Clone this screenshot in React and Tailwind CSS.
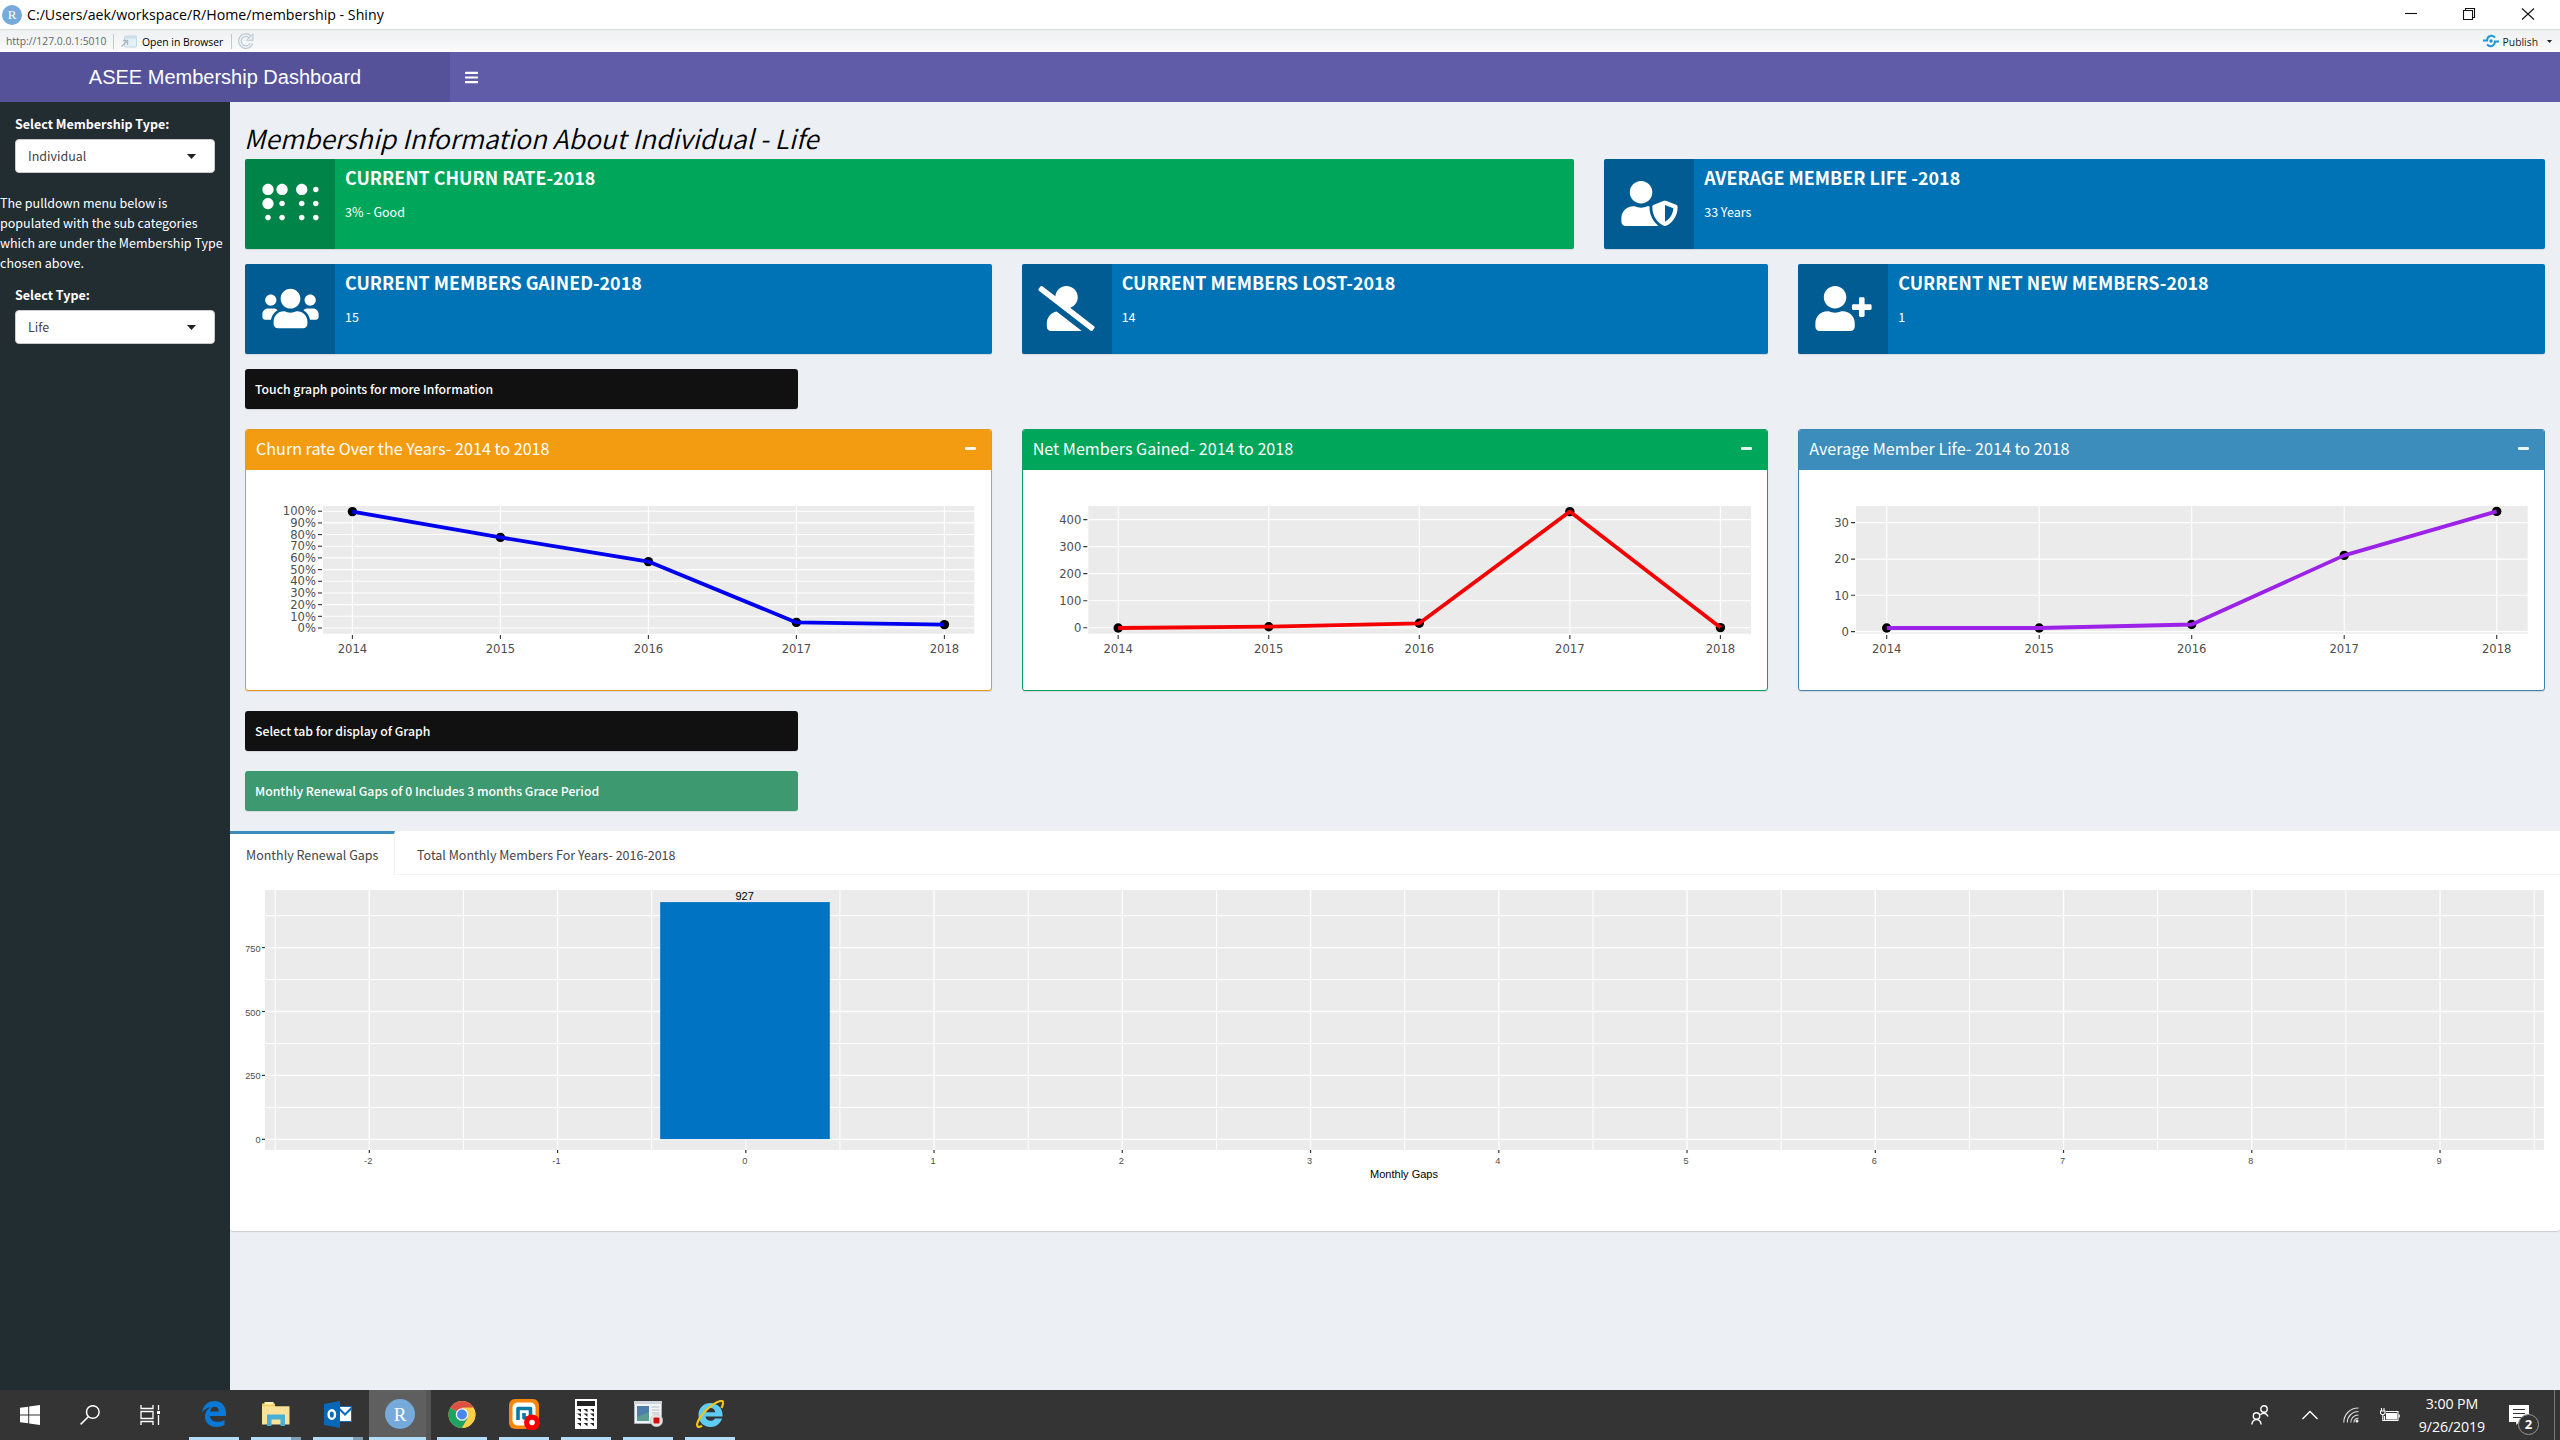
import React from "react";
import { FaBraille, FaUsers, FaUserShield, FaUserSlash, FaUserPlus, FaBars } from "react-icons/fa";

const Caret = ({ className }) => (
  <svg className={className} viewBox="0 0 9 5" fill="currentColor">
    <path d="M0 0h9L4.5 5z" />
  </svg>
);

function TitleBar() {
  return (
    <div className="flex h-[29px] items-center bg-white pl-[2px] font-['Open_Sans','Noto_Sans',sans-serif] text-black">
      <span className="flex h-5 w-5 items-center justify-center rounded-full bg-[#75aadb] font-['Liberation_Serif',serif] text-[13px] text-white">R</span>
      <span className="ml-[5px] text-[14.2px] leading-[29px] whitespace-nowrap">C:/Users/aek/workspace/R/Home/membership - Shiny</span>
      <svg className="ml-auto mr-[25px] h-[29px] w-[131px]" viewBox="0 0 131 29" fill="none" stroke="#111" strokeWidth="1.1">
        <path d="M1 13.5h12" />
        <path d="M59.5 10.5h9v9h-9zM61.5 10.5v-2h9v9h-2" />
        <path d="M118 8.5l12 11M130 8.5l-12 11" />
      </svg>
    </div>
  );
}

function ToolBar() {
  return (
    <div className="flex h-[23px] items-center border-t border-[#d9dddc] bg-gradient-to-b from-[#eef0f2] to-[#fafbfb] pl-[6px] font-['Open_Sans','Noto_Sans',sans-serif] text-[10.35px]">
      <span className="w-[107px] leading-[22px] text-[#666]">http://127.0.0.1:5010</span>
      <span className="h-[15px] w-px bg-[#c4c8ca]" />
      <svg className="ml-[7px] h-[13px] w-4" viewBox="0 0 16 13" fill="none">
        <rect x="3.5" y="1" width="12" height="11" rx="1" fill="#e3f0f6" stroke="#c3d7e2" />
        <rect x="3" y="1" width="13" height="2.5" fill="#c9dfea" />
        <path d="M0.5 11.5l5-5M2 5.5h4.5V10" stroke="#aab6c0" strokeWidth="1.4" />
      </svg>
      <span className="ml-[5px] w-[89px] pt-[2px] text-[10.4px] leading-5 text-black">Open in Browser</span>
      <span className="h-[15px] w-px bg-[#c4c8ca]" />
      <svg className="ml-[6px] h-4 w-4" viewBox="0 0 16 16" fill="none">
        <path d="M13.5 10.3A6 6 0 1 1 12 3.7" stroke="#b3c5d3" strokeWidth="3.6" />
        <path d="M13.5 10.3A6 6 0 1 1 12 3.7" stroke="#eef3f6" strokeWidth="1.6" />
        <path d="M15 .8v6.5H8.5z" fill="#e6edf2" stroke="#b3c5d3" strokeWidth=".9" />
      </svg>
      <svg className="ml-auto h-[14px] w-4" viewBox="0 0 16 14" fill="none" stroke="#1b9ad8" strokeWidth="2">
        <path d="M12 3.500C9 .5 4.500 1.500 4 6.500M0 6.500h5" />
        <path d="M4 10.500c3 3 7.500 2 8-3M11 7.500h5" />
        <circle cx="8" cy="7" r="1.7" fill="#1b9ad8" stroke="none" />
      </svg>
      <span className="ml-[4px] pt-[2px] leading-5 text-[#222]">Publish</span>
      <Caret className="ml-[9px] mr-[8px] h-[3px] w-[5px] text-[#222]" />
    </div>
  );
}

function Select({ value }) {
  return (
    <div className="mx-[15px] flex h-[34px] items-center justify-between rounded-[4px] border border-[#ccc] bg-white pl-3 pr-[18px] text-[#444]">
      <span className="text-[12.5px] leading-8">{value}</span>
      <Caret className="h-[5px] w-[9px] text-[#222]" />
    </div>
  );
}

function Sidebar() {
  return (
    <aside className="w-[230px] shrink-0 bg-[#222d32] pt-3 text-white">
      <p className="mb-[5px] pl-[15px] text-[12.5px] font-bold leading-5">Select Membership Type:</p>
      <Select value="Individual" />
      <p className="mt-5 text-[12.5px] leading-5 whitespace-nowrap">
        The pulldown menu below is
        <br />
        populated with the sub categories
        <br />
        which are under the Membership Type
        <br />
        chosen above.
      </p>
      <p className="mb-[5px] mt-3 pl-[15px] text-[12.5px] font-bold leading-5">Select Type:</p>
      <Select value="Life" />
    </aside>
  );
}

function InfoBox({ Icon, title, value, green }) {
  return (
    <div className={`flex h-[90px] rounded-[2px] text-white shadow-[0_1px_1px_rgba(0,0,0,0.1)] ${green ? "bg-[#00a65a]" : "bg-[#0073b7]"}`}>
      <div className="flex w-[90px] shrink-0 items-center justify-center rounded-l-[2px] bg-black/20 pb-px">
        <Icon className="h-[45px] w-[57px]" />
      </div>
      <div className="px-[10px] pt-2">
        <p className="text-[17.9px] font-bold leading-5">{title}</p>
        <p className="mt-[15px] text-[12.5px] leading-5">{value}</p>
      </div>
    </div>
  );
}

const Notice = ({ children, green }) => (
  <div className={`h-10 w-[553px] rounded-[3px] px-[10px] text-[12.25px] font-medium leading-10 text-white shadow-[0_1px_1px_rgba(0,0,0,0.1)] ${green ? "bg-[#3d9970]" : "bg-[#111]"}`}>{children}</div>
);

const YEARS = [2014, 2015, 2016, 2017, 2018];

function LineCard({ title, frame, bar, stroke, left, right, x0, step, ticks, points }) {
  return (
    <div className={`h-[262px] overflow-hidden rounded-[3px] border bg-white shadow-[0_1px_1px_rgba(0,0,0,0.1)] ${frame}`}>
      <div className={`flex h-10 items-center justify-between pb-[4px] pl-[10px] pr-[15px] text-white ${bar}`}>
        <span className="text-[16.15px] leading-5">{title}</span>
        <span className="h-[3px] w-[11px] rounded-[1px] bg-white/90" />
      </div>
      <svg className="h-[219px] w-[744px]" viewBox="0 0 744 219" fontFamily="'DejaVu Sans', Verdana, sans-serif" fontSize="11.6" fill="#4d4d4d">
        <rect x={left} y="36" width={right - left} height="127.7" fill="#ebebeb" />
        {ticks.map(([label, y]) => (
          <g key={label}>
            <path d={`M${left} ${y}H${right}`} stroke="#fff" strokeWidth="1.1" />
            <path d={`M${left - 5} ${y}h4`} stroke="#333" strokeWidth="1.1" />
            <text x={left - 7} y={y + 4.2} textAnchor="end">{label}</text>
          </g>
        ))}
        {YEARS.map((year, i) => (
          <g key={year}>
            <path d={`M${x0 + i * step} 36v127.7`} stroke="#fff" strokeWidth="1.1" />
            <path d={`M${x0 + i * step} 165v4`} stroke="#333" strokeWidth="1.1" />
            <text x={x0 + i * step} y="183" textAnchor="middle">{year}</text>
          </g>
        ))}
        {points.map((y, i) => (
          <circle key={i} cx={x0 + i * step} cy={y} r="4.7" fill="#000" />
        ))}
        <polyline points={points.map((y, i) => `${x0 + i * step},${y}`).join(" ")} fill="none" stroke={stroke} strokeWidth="3.78" strokeLinejoin="round" />
      </svg>
    </div>
  );
}

const PERCENTS = Array.from({ length: 11 }, (_, i) => [`${i * 10}%`, 158 - i * 11.68]);

const GAPS = [-2, -1, 0, 1, 2, 3, 4, 5, 6, 7, 8, 9];

function GapsChart() {
  const x = (v) => 515.8 + v * 188.25;
  const y = (v) => 264.4 - v * 0.2558;
  return (
    <svg className="h-[356px] w-[2330px]" viewBox="0 0 2330 356" fontFamily="'Liberation Sans', Arial, sans-serif">
      <rect x="35" y="15" width="2279" height="260" fill="#ebebeb" />
      <g stroke="#fff">
        {[0, 1, 2, 3, 4, 5, 6, 7].map((i) => (
          <path key={i} d={`M35 ${y(i * 125)}H2314`} strokeWidth={i % 2 ? 1 : 1.3} />
        ))}
        {[-2.5, ...GAPS.flatMap((v) => [v, v + 0.5])].map((v) => (
          <path key={v} d={`M${x(v)} 15v260`} strokeWidth={v % 1 ? 1 : 1.3} />
        ))}
      </g>
      <rect x="430.2" y="27.1" width="169.6" height="237" fill="#0073c2" />
      <text x="514.6" y="25" fontSize="11" textAnchor="middle">927</text>
      <g fontSize="9.2" fill="#4d4d4d">
        {[0, 250, 500, 750].map((v) => (
          <g key={v}>
            <path d={`M32 ${y(v)}h3`} stroke="#333" strokeWidth="1.2" />
            <text x="30.5" y={y(v) + 4} textAnchor="end">{v}</text>
          </g>
        ))}
        {GAPS.map((v) => (
          <g key={v}>
            <path d={`M${x(v)} 275v3`} stroke="#333" strokeWidth="1.2" />
            <text x={x(v) - 1.1} y="289" textAnchor="middle">{v}</text>
          </g>
        ))}
      </g>
      <text x="1174" y="302.5" fontSize="11" textAnchor="middle">Monthly Gaps</text>
    </svg>
  );
}

function Content() {
  return (
    <main className="flex min-w-0 flex-1 flex-col">
      <div className="px-[15px] pt-[21px]">
        <h1 className="-ml-px mb-[6px] text-[26.4px] font-[350] italic leading-[30px] text-black">Membership Information About Individual - Life</h1>
        <div className="grid grid-cols-[1329.2fr_940.8fr] gap-[30px]">
          <InfoBox green Icon={FaBraille} title="CURRENT CHURN RATE-2018" value="3% - Good" />
          <InfoBox Icon={FaUserShield} title="AVERAGE MEMBER LIFE -2018" value="33 Years" />
        </div>
        <div className="mb-[15px] mt-[15px] grid grid-cols-3 gap-[30px]">
          <InfoBox Icon={FaUsers} title="CURRENT MEMBERS GAINED-2018" value="15" />
          <InfoBox Icon={FaUserSlash} title="CURRENT MEMBERS LOST-2018" value="14" />
          <InfoBox Icon={FaUserPlus} title="CURRENT NET NEW MEMBERS-2018" value="1" />
        </div>
        <Notice>Touch graph points for more Information</Notice>
        <div className="my-5 grid grid-cols-3 gap-[30px]">
          <LineCard title="Churn rate Over the Years- 2014 to 2018" frame="border-[#e59a20]" bar="bg-[#f39c12]" stroke="#0000ee" left={77} right={728.2} x0={106.4} step={148} ticks={PERCENTS} points={[41.6, 67.4, 91.6, 152.4, 154.6]} />
          <LineCard title="Net Members Gained- 2014 to 2018" frame="border-[#0f9f60]" bar="bg-[#00a65a]" stroke="#f50000" left={65.3} right={728} x0={95.2} step={150.55} ticks={[["0", 157.7], ["100", 130.7], ["200", 103.6], ["300", 76.6], ["400", 49.6]]} points={[158, 156.7, 153.3, 41.6, 157.6]} />
          <LineCard title="Average Member Life- 2014 to 2018" frame="border-[#3c86b0]" bar="bg-[#3c8dbc]" stroke="#9b22e6" left={57} right={728.7} x0={87.7} step={152.5} ticks={[["0", 161.6], ["10", 125.3], ["20", 89.1], ["30", 52.6]]} points={[158, 158, 154.5, 85.4, 41.4]} />
        </div>
        <Notice>Select tab for display of Graph</Notice>
        <div className="mb-5 mt-5">
          <Notice green>Monthly Renewal Gaps of 0 Includes 3 months Grace Period</Notice>
        </div>
      </div>
      <section className="h-[400px] rounded-b-[3px] bg-white shadow-[0_1px_1px_rgba(0,0,0,0.15)]">
        <div className="flex h-11 text-[12.5px] leading-5 text-[#444]">
          <div className="w-[165px] border-r border-t-[3px] border-r-[#f0f0f0] border-t-[#3c8dbc] pl-4 pt-[11px]">Monthly Renewal Gaps</div>
          <div className="flex-1 border-b border-[#f4f4f4] pl-[22px] pt-[14px]">Total Monthly Members For Years- 2016-2018</div>
        </div>
        <GapsChart />
      </section>
    </main>
  );
}

const EdgeIcon = () => (
  <svg className="h-[26px] w-6" viewBox="0 0 24 26">
    <path d="M0 11.500C1 4.500 6 0 12.500 0 19.500 0 24 5 24 12v3H8c.3 4 3.500 5.800 7.500 5.800 2.700 0 5-.7 7-1.900v5.200c-2.300 1.300-5 1.900-8 1.900C7.500 26 3 21.800 3 15.500c0-4 2-7.200 5.500-9.200C5 6.800 2 8.600 0 11.500zM8.200 10.500h8.600c0-3-1.400-4.700-4-4.700-2.500 0-4.200 1.900-4.600 4.700z" fill="#0a78d6" />
  </svg>
);

const FolderIcon = () => (
  <svg className="h-[24px] w-7" viewBox="0 0 28 24">
    <path d="M0 1.500h13v3H27V22H0z" fill="#f5cf5f" />
    <path d="M2.500 0h9v2.500h-9z" fill="#fff0b5" />
    <path d="M0 4.500h27.500V22.500H0z" fill="#fbe29a" />
    <path d="M5 24V12.500h18V24h-4.500v-6.500h-9V24z" fill="#48b0d8" />
  </svg>
);

const OutlookIcon = () => (
  <svg className="h-[27px] w-7" viewBox="0 0 28 27">
    <path d="M14 5.500h13.500v15H14z" fill="#fff" stroke="#0d6dbd" />
    <path d="M14.500 7l6.500 6.500L27.500 7" fill="none" stroke="#0d6dbd" strokeWidth="2" />
    <path d="M0 3l16-3v27L0 24z" fill="#0767b8" />
    <ellipse cx="7.8" cy="13.5" rx="3.2" ry="4.3" fill="none" stroke="#fff" strokeWidth="2.4" />
  </svg>
);

const ChromeIcon = () => (
  <svg className="h-[27px] w-7" viewBox="0 0 28 28">
    <circle cx="14" cy="14" r="14" fill="#ffcf47" />
    <path d="M14 14L1.900 7A14 14 0 0 1 26.100 7H14z" fill="#dd5044" />
    <path d="M14 14L1.900 7A14 14 0 0 0 14 28l6-10.500z" fill="#1ea362" />
    <path d="M14 7h12.100A14 14 0 0 1 14 28l6.100-10.500z" fill="#ffcf47" />
    <circle cx="14" cy="14" r="6.5" fill="#f1f1f1" />
    <circle cx="14" cy="14" r="5.1" fill="#4b86f0" />
  </svg>
);

const RecorderIcon = () => (
  <svg className="h-[31px] w-[31px]" viewBox="0 0 31 31">
    <rect width="30" height="30" rx="6" fill="#f8860d" />
    <rect x="3.5" y="3.5" width="23" height="23" rx="5" fill="#fff" />
    <path d="M9 21V9.500h12.500V19H15v-5" fill="none" stroke="#0a7aa6" strokeWidth="3.6" strokeLinejoin="round" />
    <circle cx="23" cy="23.5" r="8" fill="#f80000" />
    <circle cx="23" cy="23.5" r="2.8" fill="#fff" />
  </svg>
);

const CalcIcon = () => (
  <svg className="h-[30px] w-[22px]" viewBox="0 0 22 30">
    <path d="M0 0h22v30H0z" fill="#fff" />
    <path d="M2 2h18v5H2z" fill="#222" />
    {[10, 14.5, 19, 24].map((y) => [2, 8.5, 15].map((x) => <path key={`${x}-${y}`} d={`M${x} ${y}h4v3.200z`} fill="#222" />))}
  </svg>
);

const CaptureIcon = () => (
  <svg className="h-[26px] w-[29px]" viewBox="0 0 29 26">
    <path d="M.5.500h27v22H.5z" fill="#f2f4f6" stroke="#aab2ba" />
    <path d="M0 0h28v3H0z" fill="#cfd5da" />
    <path d="M3 5h12v15H3z" fill="#5b9c93" />
    <path d="M3 5h12v6L3 16z" fill="#4e7eae" />
    <path d="M17.500 6h8M17.500 9h8M17.500 12h8" stroke="#b7bec5" />
    <circle cx="22.5" cy="19.5" r="6.2" fill="#e4e4e4" stroke="#bbb" strokeWidth=".6" />
    <rect x="19.5" y="16.5" width="6" height="6" rx="1" fill="#cc1111" />
  </svg>
);

const ExplorerIcon = () => (
  <svg className="h-[28px] w-7" viewBox="0 0 28 28">
    <path d="M2.500 15C2.500 7.500 8 3 14.500 3S26.500 8 26.500 14.500v2H9.500c.5 3 2.500 4.300 5 4.300 2 0 3.500-.8 4.500-2.300h7C24.300 23.800 20 27 14.500 27 7.500 27 2.500 22 2.500 15zM9.700 12.200h9.600c-.4-2.700-2.200-4.200-4.800-4.200s-4.300 1.500-4.800 4.200z" fill="#5fcdf3" />
    <path d="M25.500 8C28.500 2 27 0 23.500 1.200 17 3 6 12.500 2 21.500 0 26 1.500 28.500 6 25.800" fill="none" stroke="#f2c41b" strokeWidth="2.200" />
  </svg>
);

function AppSlot({ children, active, stacked }) {
  return (
    <div className={`flex h-[50px] w-[62px] flex-col items-center ${active ? "border-r-[5px] border-[#555] bg-[#5f5f5f]" : ""}`}>
      <div className={`flex h-[47px] items-center justify-center pt-[3px] pb-[2px] ${active ? "pl-[5px]" : ""}`}>{children}</div>
      <div className={`flex h-[3px] ${active ? "w-full" : "w-[50px]"} bg-[#b3ddfb]`}>{stacked && <span className="ml-auto h-full w-[10px] bg-[#7f9fb6]" />}</div>
    </div>
  );
}

function Taskbar() {
  return (
    <footer className="flex h-[50px] items-center bg-[#343434] font-['Open_Sans','Noto_Sans',sans-serif] text-white">
      <div className="flex w-[183px]">
        <svg className="mx-5 h-5 w-5" viewBox="0 0 20 20" fill="#fff">
          <path d="M0 2.800l8.200-1.100v7.800H0zM9.200 1.500L20 0v9.500H9.200zM0 10.500h8.200v7.800L0 17.200zM9.200 10.500H20V20L9.200 18.500z" />
        </svg>
        <svg className="mx-5 h-5 w-5" viewBox="0 0 20 20" fill="none" stroke="#fff" strokeWidth="1.5">
          <circle cx="12.8" cy="7" r="6.3" />
          <path d="M8.300 11.700L.6 19.400" />
        </svg>
        <svg className="mx-5 h-5 w-5" viewBox="0 0 20 20" fill="none" stroke="#fff" strokeWidth="1.3">
          <path d="M1 0v3.500h12V0M1 6.500h12v7H1zM1 20v-3.500h12V20M18.500 0v5M18.500 10v10" />
          <path d="M17 6h3v3h-3z" fill="#fff" stroke="none" />
        </svg>
      </div>
      <AppSlot><EdgeIcon /></AppSlot>
      <AppSlot stacked><FolderIcon /></AppSlot>
      <AppSlot stacked><OutlookIcon /></AppSlot>
      <AppSlot active>
        <span className="flex h-[30px] w-[30px] items-center justify-center rounded-full bg-[#75aadb] font-['Liberation_Serif',serif] text-[19px] leading-none">R</span>
      </AppSlot>
      <AppSlot><ChromeIcon /></AppSlot>
      <AppSlot><RecorderIcon /></AppSlot>
      <AppSlot><CalcIcon /></AppSlot>
      <AppSlot><CaptureIcon /></AppSlot>
      <AppSlot><ExplorerIcon /></AppSlot>
      <svg className="ml-auto h-5 w-[18px]" viewBox="0 0 18 20" fill="none" stroke="#fff" strokeWidth="1.4">
        <circle cx="13" cy="4" r="3.2" />
        <path d="M9.500 10c1.500-2.500 5.500-2.800 7.500 1.500" />
        <circle cx="5.5" cy="11" r="3.2" />
        <path d="M.8 19.500c1-6.500 8.400-6.500 9.400 0" />
      </svg>
      <svg className="ml-[33px] h-[10px] w-4" viewBox="0 0 16 10" fill="none" stroke="#fff" strokeWidth="1.4">
        <path d="M.5 9L8 1.500 15.500 9" />
      </svg>
      <svg className="ml-[25px] h-4 w-4" viewBox="0 0 16 16" fill="none" stroke="#ddd" strokeWidth="1.1">
        <path d="M.8 15.500C.8 7.500 7 1 15.500 1M4.300 15.500C4.300 9.500 9 4.500 15.500 4.500M7.800 15.500c0-4.200 3.200-7.500 7.700-7.500M11 15.500c0-2.500 1.800-4.300 4.500-4.300" />
        <circle cx="14" cy="14" r="1.5" fill="#fff" stroke="none" />
      </svg>
      <svg className="ml-[21px] h-[14px] w-5" viewBox="0 0 20 14" fill="none" stroke="#fff" strokeWidth="1.1">
        <path d="M1.500 0v3M4 0v3M.5 3h4.500v2.500l-1.300 1H1.800L.5 5.500zM2.800 6.500v6h2" />
        <path d="M6 3.500h12v9H4.500V8" />
        <path d="M6 5h11v6.500H6zM18.500 6.500h1.300v3h-1.300z" fill="#fff" stroke="none" />
      </svg>
      <div className="ml-[12px] w-20 pt-px text-center text-[14.2px] leading-[22.5px] tracking-[-0.1px]">
        <p>3:00 PM</p>
        <p>9/26/2019</p>
      </div>
      <div className="ml-[17px] h-[38px] w-[30px] pt-[9px]">
        <div className="relative h-5 w-5">
          <svg className="h-5 w-5" viewBox="0 0 20 20">
            <path d="M0 0h20v17H10l-2.500 3-.5-3H0z" fill="#fff" />
            <path d="M4 4.500h12M4 8.500h12M4 12.500h12" stroke="#343434" strokeWidth="1.2" />
          </svg>
          <span className="absolute left-[9px] top-[9px] flex h-[21px] w-[21px] items-center justify-center rounded-full border border-[#999] bg-[#343434] text-[13px] font-bold leading-none">2</span>
        </div>
      </div>
      <span className="ml-[15px] mr-[5px] h-[50px] w-px bg-[#777]" />
    </footer>
  );
}

export default function App() {
  return (
    <div className="flex h-[1440px] w-[2560px] flex-col overflow-hidden bg-[#ecf0f5] font-['Noto_Sans_CJK_SC',sans-serif]">
      <TitleBar />
      <ToolBar />
      <header className="flex h-[50px] items-center bg-[#605ca8] text-white">
        <div className="w-[450px] bg-[#555299] text-center font-['Liberation_Sans',Arial,sans-serif] text-[20px] leading-[50px]">ASEE Membership Dashboard</div>
        <FaBars className="ml-[15px] h-[15px] w-[13px]" />
      </header>
      <div className="flex min-h-0 flex-1">
        <Sidebar />
        <Content />
      </div>
      <Taskbar />
    </div>
  );
}
